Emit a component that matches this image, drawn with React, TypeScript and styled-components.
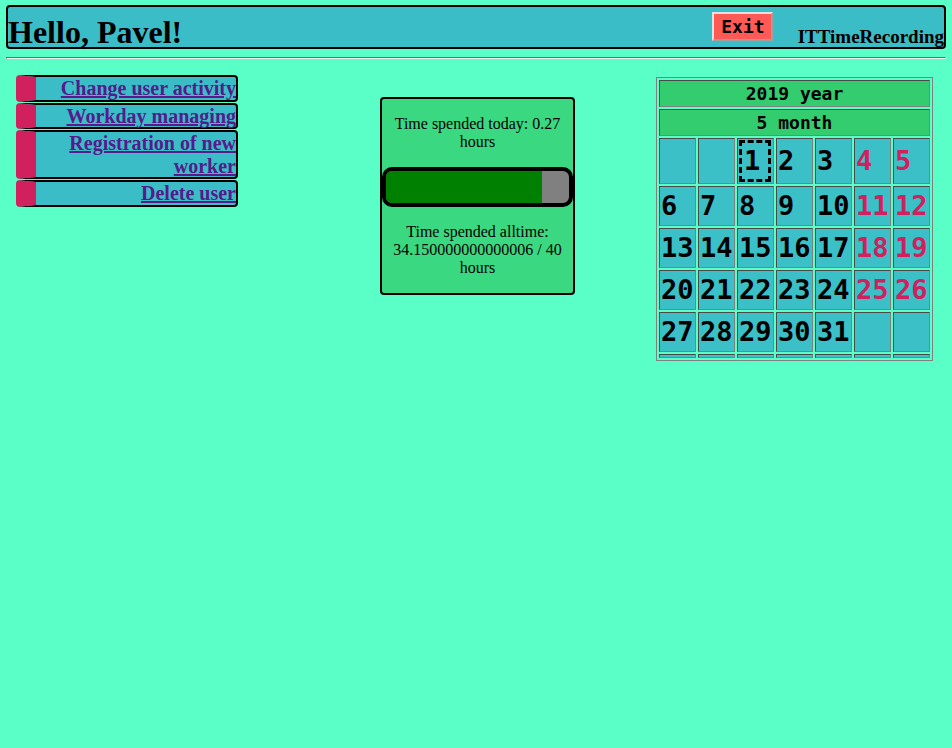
import React from 'react';
import styled, { createGlobalStyle } from 'styled-components';

const GlobalStyle = createGlobalStyle`
  body {
    margin: 0;
    background-color: #5affc8;
    font-family: 'Liberation Serif', 'Times New Roman', serif;
  }
`;

const Page = styled.div`
  padding: 5px 6px 0 6px;
`;

const HeaderBar = styled.header`
  display: flex;
  align-items: flex-end;
  height: 40px;
  background-color: #3bbdc8;
  border: 2px solid #000;
  border-radius: 4px;
`;

const Greeting = styled.h1`
  flex: 1;
  margin: 0;
  font-size: 32px;
  font-weight: bold;
  line-height: 30px;
`;

const ExitButton = styled.button`
  align-self: flex-start;
  margin: 5px 25px 0 0;
  padding: 2px 6px 2px 7px;
  background-color: #ff5a55;
  border: 2px solid;
  border-color: #e2e2e2 #a0a0a0 #a0a0a0 #e2e2e2;
  font-family: 'DejaVu Sans Mono', monospace;
  font-size: 18px;
  font-weight: bold;
  line-height: 21px;
  color: #000;
  cursor: pointer;
`;

const Brand = styled.h3`
  margin: 0;
  font-size: 19px;
  font-weight: bold;
  line-height: 21.5px;
`;

const Divider = styled.hr`
  margin: 8px 0;
  border: 1px inset #eee;
  border-color: #c0c0c0 #eee #eee #c0c0c0;
`;

const Main = styled.div`
  display: flex;
  align-items: flex-start;
`;

const Menu = styled.ul`
  list-style: none;
  margin: 8px 0 0 10px;
  padding: 0;
  width: 222px;
`;

const MenuItem = styled.li`
  margin-bottom: 1px;
  background-color: #3bbdc8;
  border: 2px solid #000;
  border-left: 20px solid #d0205e;
  border-radius: 4px;
  text-align: right;
  font-size: 20px;
  line-height: 22.5px;
`;

const MenuLink = styled.a`
  color: #551a8b;
  font-weight: bold;
  text-decoration: underline;
`;

const StatsPanel = styled.div`
  box-sizing: border-box;
  width: 195px;
  margin: 30px 0 0 142px;
  background-color: #3ad880;
  border: 2px solid #000;
  border-radius: 4px;
  text-align: center;
  font-size: 16px;
`;

const StatsText = styled.p`
  margin: 16px 0;
`;

const Progress = styled.div`
  box-sizing: border-box;
  height: 40px;
  background-color: #808080;
  border: 4px solid #000;
  border-radius: 10px;
  overflow: hidden;
`;

const ProgressFill = styled.div`
  height: 100%;
  background-color: #008000;
`;

const Calendar = styled.table`
  margin: 10px 0 0 81px;
  border: 1px solid #808080;
  border-spacing: 2px;
  table-layout: fixed;
  font-family: 'DejaVu Sans Mono', monospace;
  font-weight: bold;
`;

const HeadCell = styled.td`
  padding: 1px;
  height: 27px;
  box-sizing: border-box;
  background-color: #33cc6e;
  border: 1px solid;
  border-color: #4a4a4a #808080 #808080 #4a4a4a;
  text-align: center;
  font-size: 18px;
  line-height: 21px;
`;

const DayCell = styled.td<{ $weekend?: boolean }>`
  width: 37px;
  box-sizing: border-box;
  padding: 1px;
  background-color: #3cc0c8;
  border: 1px solid;
  border-color: #4a4a4a #808080 #808080 #4a4a4a;
  text-align: left;
  font-size: 27px;
  line-height: 36px;
  color: ${p => (p.$weekend ? '#d0205e' : '#000')};
  white-space: nowrap;
`;

const EmptyCell = styled.td`
  padding: 1px;
  height: 4px;
  box-sizing: border-box;
  background-color: #3cc0c8;
  border: 1px solid;
  border-color: #4a4a4a #808080 #808080 #4a4a4a;
`;

const Today = styled.span`
  display: inline-block;
  border: 3px dashed #000;
  padding: 0 8px 0 2px;
`;

const menuItems = ['Change user activity', 'Workday managing', 'Registration of new worker', 'Delete user'];

// May 2019 starts on Wednesday
const weeks: (number | null)[][] = [
  [null, null, 1, 2, 3, 4, 5],
  [6, 7, 8, 9, 10, 11, 12],
  [13, 14, 15, 16, 17, 18, 19],
  [20, 21, 22, 23, 24, 25, 26],
  [27, 28, 29, 30, 31, null, null],
];

const today = 1;
const spentToday = 0.27;
const spentAll = 34.150000000000006;
const norm = 40;

const App: React.FC = () => {
  const percent = Math.min(100, (spentAll / norm) * 100);

  return (
    <Page>
      <GlobalStyle />
      <HeaderBar>
        <Greeting>Hello, Pavel!</Greeting>
        <ExitButton>Exit</ExitButton>
        <Brand>ITTimeRecording</Brand>
      </HeaderBar>
      <Divider />
      <Main>
        <Menu>
          {menuItems.map(item => (
            <MenuItem key={item}>
              <MenuLink href="#">{item}</MenuLink>
            </MenuItem>
          ))}
        </Menu>
        <StatsPanel>
          <StatsText>Time spended today: {spentToday} hours</StatsText>
          <Progress>
            <ProgressFill style={{ width: `${percent}%` }} />
          </Progress>
          <StatsText>
            Time spended alltime: {spentAll} / {norm} hours
          </StatsText>
        </StatsPanel>
        <Calendar>
          <tbody>
            <tr>
              <HeadCell colSpan={7}>2019 year</HeadCell>
            </tr>
            <tr>
              <HeadCell colSpan={7}>5 month</HeadCell>
            </tr>
            {weeks.map((week, i) => (
              <tr key={i}>
                {week.map((day, j) => (
                  <DayCell key={j} $weekend={j >= 5}>
                    {day === today ? <Today>{day}</Today> : day}
                  </DayCell>
                ))}
              </tr>
            ))}
            <tr>
              {Array.from({ length: 7 }).map((_, j) => (
                <EmptyCell key={j} />
              ))}
            </tr>
          </tbody>
        </Calendar>
      </Main>
    </Page>
  );
};

export default App;
